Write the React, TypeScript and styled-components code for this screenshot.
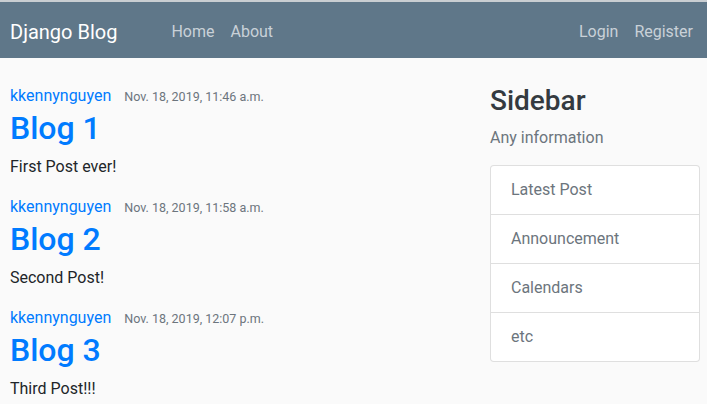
import React from "react";
import styled, { createGlobalStyle } from "styled-components";

const Global = createGlobalStyle`
  html, body { margin: 0; padding: 0; }
  body {
    background: #fafafa;
    font-family: Roboto, "Liberation Sans", sans-serif;
    font-size: 16px;
    line-height: 1.5;
    color: #212529;
  }
  * { box-sizing: border-box; }
`;

const Header = styled.header`
  border-top: 2px solid #c9ced2;
  background: #5f7789;
  height: 58px;
  display: flex;
  align-items: flex-start;
  padding: 15px 6px 0 10px;
`;

const Brand = styled.a`
  font-size: 20px;
  color: #ffffff;
  text-decoration: none;
  line-height: 30px;
  margin-right: 46px;
`;

const Nav = styled.nav<{ $push?: boolean }>`
  display: flex;
  margin-top: 3px;
  margin-left: ${(p) => (p.$push ? "auto" : "0")};
`;

const NavLink = styled.a`
  color: #c9d1d8;
  text-decoration: none;
  font-size: 16px;
  padding: 0 8px;
  line-height: 24px;
`;

const Main = styled.main`
  display: grid;
  grid-template-columns: 1fr 210px;
  column-gap: 20px;
  padding: 26px 7px 0 10px;
`;

const Posts = styled.section`
  display: flex;
  flex-direction: column;
  gap: 16px;
`;

const Article = styled.article`
  display: flex;
  flex-direction: column;
`;

const Meta = styled.div`
  display: flex;
  align-items: baseline;
  line-height: 24px;
`;

const Author = styled.a`
  color: #007bff;
  text-decoration: none;
  font-size: 16px;
  margin-right: 13px;
`;

const DateText = styled.small`
  color: #6c757d;
  font-size: 12.5px;
`;

const Title = styled.h2`
  margin: 0 0 8px;
  font-size: 32px;
  font-weight: 500;
  line-height: 38px;
  color: #007bff;
`;

const Body = styled.p`
  margin: 0;
  line-height: 24px;
`;

const Sidebar = styled.aside`
  display: flex;
  flex-direction: column;
`;

const SideTitle = styled.h3`
  margin: 0 0 8px;
  font-size: 28px;
  font-weight: 500;
  line-height: 33.6px;
  color: #343a40;
`;

const Muted = styled.p`
  margin: 0 0 15px;
  color: #6c757d;
  line-height: 24px;
`;

const List = styled.ul`
  list-style: none;
  margin: 0;
  padding: 0;
  background: #fff;
  border: 1px solid rgba(0, 0, 0, 0.125);
  border-radius: 4px;
`;

const Item = styled.li`
  padding: 12px 20px;
  line-height: 24px;
  color: #6c757d;
  & + & { border-top: 1px solid rgba(0, 0, 0, 0.125); }
`;

const posts = [
  { title: "Blog 1", date: "Nov. 18, 2019, 11:46 a.m.", body: "First Post ever!" },
  { title: "Blog 2", date: "Nov. 18, 2019, 11:58 a.m.", body: "Second Post!" },
  { title: "Blog 3", date: "Nov. 18, 2019, 12:07 p.m.", body: "Third Post!!!" },
];

export default function App() {
  return (
    <>
      <Global />
      <Header>
        <Brand href="#">Django Blog</Brand>
        <Nav>
          <NavLink href="#">Home</NavLink>
          <NavLink href="#">About</NavLink>
        </Nav>
        <Nav $push>
          <NavLink href="#">Login</NavLink>
          <NavLink href="#">Register</NavLink>
        </Nav>
      </Header>
      <Main>
        <Posts>
          {posts.map((p) => (
            <Article key={p.title}>
              <Meta>
                <Author href="#">kkennynguyen</Author>
                <DateText>{p.date}</DateText>
              </Meta>
              <Title>{p.title}</Title>
              <Body>{p.body}</Body>
            </Article>
          ))}
        </Posts>
        <Sidebar>
          <SideTitle>Sidebar</SideTitle>
          <Muted>Any information</Muted>
          <List>
            <Item>Latest Post</Item>
            <Item>Announcement</Item>
            <Item>Calendars</Item>
            <Item>etc</Item>
          </List>
        </Sidebar>
      </Main>
    </>
  );
}
